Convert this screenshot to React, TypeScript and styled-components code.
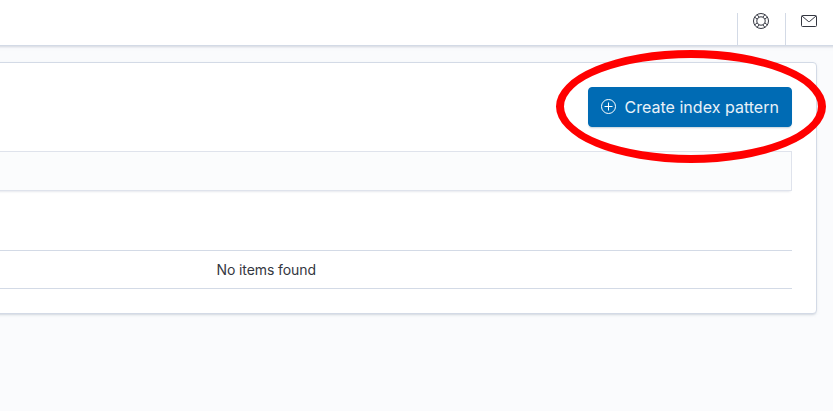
import React from "react";
import styled, { createGlobalStyle } from "styled-components";

const GlobalStyle = createGlobalStyle`
  * { box-sizing: border-box; }
  body {
    margin: 0;
    background: #fafbfd;
    color: #343741;
    font-family: Inter, "Liberation Sans", sans-serif;
    overflow: hidden;
  }
`;

const Page = styled.div`
  position: relative;
  height: 411px;
  overflow: hidden;
`;

const Header = styled.header`
  display: flex;
  justify-content: flex-end;
  align-items: flex-end;
  height: 46px;
  margin: 0 -8px;
  padding-right: 8px;
  background: #fff;
  border-bottom: 1px solid #d3dae6;
  box-shadow: 0 2px 2px -1px rgba(152, 162, 179, 0.3), 0 1px 5px -2px rgba(152, 162, 179, 0.3);
`;

const HeaderAction = styled.button`
  display: flex;
  justify-content: center;
  width: 48px;
  height: 32px;
  padding: 0 1px 0 0;
  border: 0;
  border-left: 1px solid #d3dae6;
  background: transparent;
  color: #343741;
`;

const Icon = styled.svg`
  display: block;
  flex: none;
  width: 16px;
  height: 16px;
  fill: none;
  stroke: currentColor;
`;

const Panel = styled.main`
  height: 252px;
  margin: 16px 16px 0 -8px;
  padding: 24px 24px 0 0;
  background: #fff;
  border: 1px solid #d3dae6;
  border-radius: 4px;
  box-shadow: 0 2px 2px -1px rgba(152, 162, 179, 0.3), 0 1px 5px -2px rgba(152, 162, 179, 0.3);
`;

const Actions = styled.div`
  display: flex;
  justify-content: flex-end;
`;

const CreateButton = styled.button`
  display: flex;
  align-items: center;
  gap: 8px;
  width: 204px;
  height: 40px;
  padding: 0 11.5px;
  border: 1px solid #006bb4;
  border-radius: 4px;
  background: #006bb4;
  color: #fff;
  font: 400 16px/24px Inter, "Liberation Sans", sans-serif;
  letter-spacing: 0.02px;
  white-space: nowrap;
  box-shadow: 0 2px 2px -1px rgba(54, 97, 126, 0.3);
`;

const ButtonLabel = styled.span`
  color: #e8f1f8;
`;

const SearchBar = styled.div`
  height: 40px;
  margin-top: 24px;
  border: 1px solid #dfe3ec;
  border-left: 0;
  background: #fbfcfd;
  box-shadow: 0 1px 1px -1px rgba(152, 162, 179, 0.2), 0 3px 2px -2px rgba(152, 162, 179, 0.2);
`;

const EmptyRow = styled.div`
  display: flex;
  align-items: center;
  height: 39px;
  margin-top: 59px;
  padding-left: 223.5px;
  border: solid #d3dae6;
  border-width: 1px 0;
  font-size: 14px;
  line-height: 21px;
  letter-spacing: -0.1px;
`;

const Highlight = styled.div`
  position: absolute;
  top: 50px;
  left: 556px;
  width: 270px;
  height: 113px;
  border: 8px solid #f00;
  border-radius: 50%;
  pointer-events: none;
`;

function HelpIcon() {
  return (
    <Icon viewBox="0 0 16 16">
      <circle cx="8" cy="8" r="7.5" />
      <circle cx="8" cy="8" r="4.2" />
      <path d="M1.7 4.1l2.6 2.2M4.1 1.7l2.2 2.6M11.9 1.7l-2.2 2.6M14.3 4.1l-2.6 2.2M14.3 11.9l-2.6-2.2M11.9 14.3l-2.2-2.6M4.1 14.3l2.2-2.6M1.7 11.9l2.6-2.2" />
    </Icon>
  );
}

function MailIcon() {
  return (
    <Icon viewBox="0 0 16 16">
      <rect x="0.5" y="2.5" width="15" height="11" rx="1" />
      <path d="M1 3l6.3 5.4a1 1 0 0 0 1.4 0L15 3" />
    </Icon>
  );
}

function PlusCircleIcon() {
  return (
    <Icon viewBox="0 0 16 16">
      <circle cx="7.5" cy="7.5" r="7" />
      <path d="M7.5 3.5v8M3.5 7.5h8" />
    </Icon>
  );
}

export default function App() {
  return (
    <Page>
      <GlobalStyle />
      <Header>
        <HeaderAction aria-label="Help"><HelpIcon /></HeaderAction>
        <HeaderAction aria-label="Mail"><MailIcon /></HeaderAction>
      </Header>
      <Panel>
        <Actions>
          <CreateButton><PlusCircleIcon /><ButtonLabel>Create index pattern</ButtonLabel></CreateButton>
        </Actions>
        <SearchBar />
        <EmptyRow>No items found</EmptyRow>
      </Panel>
      <Highlight />
    </Page>
  );
}
